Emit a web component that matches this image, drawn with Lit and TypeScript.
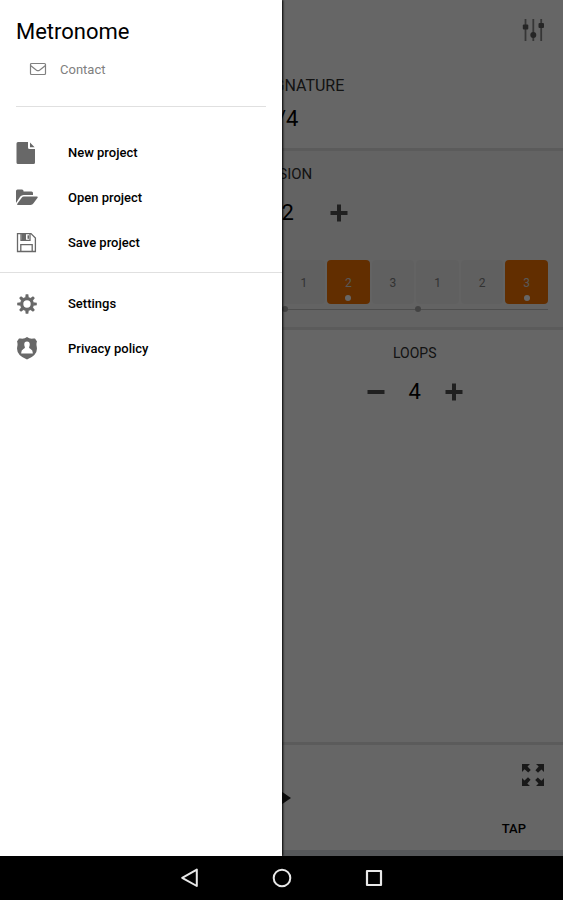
import { LitElement, html, css, svg, TemplateResult } from "lit";
import { customElement } from "lit/decorators.js";
import { classMap } from "lit/directives/class-map.js";

const icons: Record<string, TemplateResult> = {
  mail: svg`<rect x="1.5" y="2.500" width="15" height="11" rx="1" fill="none" stroke="currentColor" stroke-width="1.2"/><path d="M1.5 4.500L7.500 9.200Q9 10.200 10.500 9.200L16.500 4.500" fill="none" stroke="currentColor" stroke-width="1.2"/>`,
  file: svg`<path d="M2 0H12V5.500Q12 7 13.500 7H19V20.500Q19 22 17.500 22H2Q0.500 22 0.500 20.500V1.500Q0.500 0 2 0Z M14 0.500L18.600 5.200H14Z" fill="currentColor"/>`,
  folder: svg`<path d="M0 16V4Q0 2.500 1.500 2.500H6Q7.500 2.500 7.500 4V4.500H15.500Q17 4.500 17 6V8H7.500Q5.600 8 4.300 9.500Z" fill="currentColor"/><path d="M8 9.600H21Q22.300 9.800 21.400 11L17.500 16.200Q16.500 18 14.500 18H2Q.6 17.800 1.500 16.600L5.500 11Q6.500 9.600 8 9.600Z" fill="currentColor"/>`,
  save: svg`<path d="M1.500 1.600H15L19.400 6V19.500H1.500Z M4.800 19V12.600H16.200V19 M5 2V8.400H14V2" fill="none" stroke="currentColor" stroke-width="1.3"/><rect x="5.500" y="2" width="4.500" height="6" fill="currentColor"/><rect x="11.500" y="3.300" width="1.500" height="3.500" fill="currentColor"/>`,
  gear: svg`<circle cx="11" cy="11" r="5.300" fill="none" stroke="currentColor" stroke-width="3.200"/>${[0, 45, 90, 135, 180, 225, 270, 315].map(
    (a) => svg`<path d="M9.200 4.800L9.700 1.200H12.300L12.800 4.800Z" fill="currentColor" transform="rotate(${a} 11 11)"/>`
  )}`,
  shield: svg`<path fill-rule="evenodd" d="M11 0Q13.500 2 17 1.600L19 1.400L21 4.500Q20 6.500 20.800 10Q22.200 18 11 22.500Q-.2 18 1.200 10Q2 6.500 1 4.500L3 1.400L5 1.600Q8.500 2 11 0Z M11 4.500C7.800 4.500 7.800 8 9 10.200Q8.800 11.500 7.400 12Q5 13 5.200 16.500H16.800Q17 13 14.600 12Q13.200 11.500 13 10.200C14.200 8 14.200 4.500 11 4.500Z" fill="currentColor"/>`,
  sliders: svg`<path d="M4.500 0V22M12.300 0V22M20.200 0V22" stroke="currentColor" stroke-width="1.800" opacity=".75" fill="none"/><rect x="1.800" y="5.500" width="5.500" height="5" rx="1" fill="currentColor"/><circle cx="12.300" cy="16" r="3" fill="currentColor"/><rect x="17.500" y="4" width="5.500" height="5" rx="1" fill="currentColor"/>`,
  plus: svg`<path d="M9 .5V17.500M.5 9H17.500" stroke="currentColor" stroke-width="4" fill="none"/>`,
  minus: svg`<path d="M.5 9H17.500" stroke="currentColor" stroke-width="4" fill="none"/>`,
  play: svg`<path d="M2 0L18 11L2 22Z" fill="currentColor"/>`,
  expand: svg`${[0, 90, 180, 270].map(
    (a) => svg`<path d="M1 1H9L6.500 3.500L9.800 7L7.200 9.600L3.600 6.300L1 9Z" fill="currentColor" transform="rotate(${a} 12 12)"/>`
  )}`,
  back: svg`<path d="M18.800 3.600V20L4.200 11.800Z" fill="none" stroke="currentColor" stroke-width="2" stroke-linejoin="round"/>`,
  home: svg`<circle cx="12" cy="12" r="8.300" fill="none" stroke="currentColor" stroke-width="2"/>`,
  recent: svg`<rect x="5" y="5" width="14" height="14" fill="none" stroke="currentColor" stroke-width="2.200" stroke-linejoin="round"/>`,
};

const icon = (name: string, w: number, h = w) =>
  html`<svg width=${w} height=${h} viewBox="0 0 ${w} ${h}" aria-hidden="true">${icons[name]}</svg>`;

const steps = [
  { label: 1, accent: false },
  { label: 2, accent: true },
  { label: 3, accent: false },
  { label: 1, accent: false },
  { label: 2, accent: false },
  { label: 3, accent: true },
];

@customElement("app-root")
export class AppRoot extends LitElement {
  static styles = css`
    :host {
      display: flex;
      flex-direction: column;
      min-height: 100vh;
      font-family: Roboto, "Liberation Sans", sans-serif;
      color: #000;
      background: #000;
    }
    * { box-sizing: border-box; }
    svg { display: block; }
    button {
      font: inherit;
      color: inherit;
      background: none;
      border: 0;
      padding: 0;
      cursor: pointer;
    }
    .stage {
      position: relative;
      flex: 1;
      display: flex;
      flex-direction: column;
    }
    .page {
      flex: 1;
      display: flex;
      flex-direction: column;
      background: #fff;
    }
    .band { border-bottom: 3px solid #e4e4e4; }
    .top { padding-bottom: 16px; }
    .toolbar {
      display: flex;
      justify-content: flex-end;
      align-items: flex-start;
      padding: 19px 18px 0;
      height: 76px;
      color: #606060;
    }
    .field {
      display: flex;
      flex-direction: column;
      align-items: center;
    }
    .label { font-size: 15px; line-height: 20px; color: #303030; }
    .value { font-size: 22px; line-height: 26px; }
    .top .label { font-size: 16px; }
    .top .value { margin-top: 10px; }
    .division { padding: 13px 15px 15px; background: #f8f8f8; }
    .stepper {
      display: flex;
      align-items: center;
      gap: 24px;
      margin-top: 16px;
    }
    .stepper.wide { gap: 36px; }
    .stepper button { color: #505050; }
    .steps {
      display: grid;
      grid-template-columns: repeat(12, 1fr);
      gap: 2px;
      margin-top: 34px;
    }
    .step {
      display: flex;
      flex-direction: column;
      align-items: center;
      justify-content: flex-end;
      gap: 3px;
      height: 44px;
      padding-bottom: 3px;
      border-radius: 4px;
      background: #f0f0f0;
      color: #808080;
      font-size: 12px;
      line-height: 18px;
    }
    .step:first-child { grid-column-start: 7; }
    .step.accent { background: #f57300; color: #ddd; }
    .dot {
      width: 6px;
      height: 6px;
      border-radius: 3px;
    }
    .accent .dot { background: #fff; }
    .beats {
      display: grid;
      grid-template-columns: repeat(4, 1fr);
      align-items: center;
      height: 6px;
      margin-top: 2px;
      background: linear-gradient(#c4c4c4, #c4c4c4) center / 100% 1px no-repeat;
    }
    .beats .dot { background: #a8a8a8; }
    .loops {
      flex: 1;
      display: grid;
      grid-template-columns: 1fr 1fr;
      align-items: start;
      padding: 13px 15px;
    }
    .loops .field { grid-column: 2; }
    .loops .label { font-size: 14px; }
    .transport {
      display: grid;
      grid-template-columns: 1fr auto 1fr;
      align-items: center;
      height: 111px;
      padding: 0 18px;
      border-bottom: 6px solid #d8dce0;
    }
    .play { grid-column: 2; color: #202020; }
    .side {
      display: flex;
      flex-direction: column;
      align-items: flex-end;
      gap: 30px;
      padding-top: 9px;
      color: #404040;
    }
    .tap {
      padding: 0 19px;
      font-size: 13px;
      font-weight: 500;
      line-height: 24px;
      color: #000;
    }
    .scrim {
      position: absolute;
      inset: 0;
      background: rgba(0, 0, 0, 0.6);
    }
    .drawer {
      position: absolute;
      inset: 0 50% 0 0;
      background: #fff;
      box-shadow: 1px 0 2px #000;
      clip-path: inset(0 -8px 0 0);
    }
    .head {
      display: flex;
      flex-direction: column;
      align-items: flex-start;
      margin: 0 16px;
      padding: 18px 0 26px;
      border-bottom: 1px solid #e0e0e0;
    }
    h1 {
      margin: 0;
      font-size: 22px;
      font-weight: 400;
      line-height: 28px;
    }
    .contact {
      display: flex;
      align-items: center;
      gap: 13px;
      margin-top: 14px;
      padding-left: 13px;
      font-size: 13px;
      line-height: 20px;
      color: #808080;
      text-decoration: none;
    }
    .menu {
      margin: 0;
      padding: 8px 0;
      list-style: none;
    }
    .menu.first { padding: 23px 0 7px; border-bottom: 1px solid #e0e0e0; }
    .menu button {
      display: grid;
      grid-template-columns: 22px 1fr;
      gap: 30px;
      align-items: center;
      width: 100%;
      height: 45px;
      padding: 0 16px;
      text-align: left;
      font-size: 13px;
      font-weight: 500;
    }
    .menu svg { color: #686868; }
    .system {
      display: flex;
      justify-content: center;
      align-items: center;
      gap: 68px;
      height: 44px;
      background: #000;
      color: #e8e8e8;
    }
  `;

  private item(name: string, label: string) {
    return html`<li><button>${icon(name, 22, name === "shield" ? 23 : 22)}<span>${label}</span></button></li>`;
  }

  render() {
    return html`
      <div class="stage">
        <main class="page">
          <section class="band top">
            <div class="toolbar"><button aria-label="Mixer">${icon("sliders", 24)}</button></div>
            <div class="field">
              <span class="label">TIME SIGNATURE</span>
              <span class="value">4/4</span>
            </div>
          </section>
          <section class="band division">
            <div class="field">
              <span class="label">DIVISION</span>
              <div class="stepper wide">
                <button aria-label="Decrease division">${icon("minus", 18)}</button>
                <span class="value">12</span>
                <button aria-label="Increase division">${icon("plus", 18)}</button>
              </div>
            </div>
            <div class="steps">
              ${steps.map(
                (s) => html`<button class=${classMap({ step: true, accent: s.accent })}>
                  <span>${s.label}</span><span class="dot"></span>
                </button>`
              )}
            </div>
            <div class="beats">${[0, 1, 2, 3].map(() => html`<span class="dot"></span>`)}</div>
          </section>
          <section class="band loops">
            <div class="field">
              <span class="label">LOOPS</span>
              <div class="stepper">
                <button aria-label="Decrease loops">${icon("minus", 18)}</button>
                <span class="value">4</span>
                <button aria-label="Increase loops">${icon("plus", 18)}</button>
              </div>
            </div>
          </section>
          <footer class="transport">
            <button class="play" aria-label="Play">${icon("play", 18, 22)}</button>
            <div class="side">
              <button aria-label="Full screen">${icon("expand", 24)}</button>
              <button class="tap">TAP</button>
            </div>
          </footer>
        </main>
        <div class="scrim"></div>
        <aside class="drawer">
          <header class="head">
            <h1>Metronome</h1>
            <a class="contact" href="#contact">${icon("mail", 18)}Contact</a>
          </header>
          <ul class="menu first">
            ${this.item("file", "New project")}
            ${this.item("folder", "Open project")}
            ${this.item("save", "Save project")}
          </ul>
          <ul class="menu">
            ${this.item("gear", "Settings")}
            ${this.item("shield", "Privacy policy")}
          </ul>
        </aside>
      </div>
      <nav class="system">
        <button aria-label="Back">${icon("back", 24)}</button>
        <button aria-label="Home">${icon("home", 24)}</button>
        <button aria-label="Recent apps">${icon("recent", 24)}</button>
      </nav>
    `;
  }
}
